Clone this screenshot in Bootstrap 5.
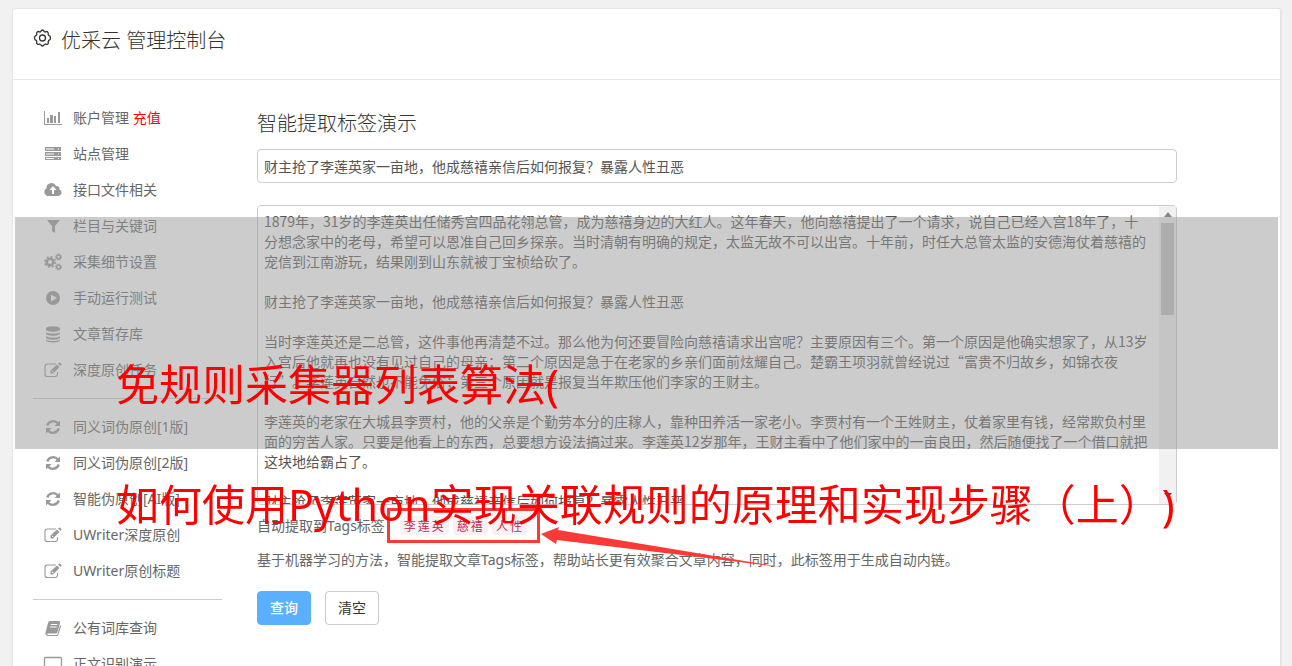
<!DOCTYPE html>
<html lang="zh-CN">
<head>
<meta charset="utf-8">
<meta name="viewport" content="width=device-width, initial-scale=1">
<title>优采云 管理控制台</title>
<link href="https://cdn.jsdelivr.net/npm/bootstrap@5.3.0/dist/css/bootstrap.min.css" rel="stylesheet">
<style>
body{font:400 14px/20px "Noto Sans","Noto Sans CJK SC",sans-serif;color:#666;background:#f1f1f1;text-spacing-trim:space-all}
.panel{margin:8px 10px 0 12px;border:1px solid #e5e5e5;border-right-width:2px;border-radius:4px;background:#fff}
.panel-head{height:71px;padding:0 20px 10px;border-bottom:1px solid #e5e5e5;color:#333}
.panel-head h1{font-size:20px;line-height:24px;font-weight:300;padding-top:4px}
.side{width:230px;padding:20px 20px 0}
.side a{height:36px;padding-left:10px;color:#666;gap:10px}
.side svg{width:20px;height:18px;color:#999;flex:none}
.side hr{margin:10px 0;border-color:#ccc;opacity:1;width:189px}
.side .pay{color:#f00}
.main-col{padding:31px 14px 0;max-width:948px}
.main-col h2{font-size:20px;line-height:26px;font-weight:300;color:#333;margin-bottom:12px}
.main-col .form-control{border-color:#ccc;border-radius:4px;padding:6px;font-size:14px;line-height:20px;color:#555;font-family:"Noto Sans CJK SC",sans-serif}
.title-box{margin-bottom:22px}
.main-col textarea.form-control{height:300px;resize:none;overflow-y:scroll;scrollbar-width:none;display:block;padding:5px 26px 5px 6px}
.bar{position:absolute;top:1px;right:1px;bottom:1px;width:17px;background:#f1f1f1;padding:6px 2px}
.bar svg{width:8px;height:5px}
.bar .thumb{height:92px;margin:6px 0 auto;background:#c1c1c1;width:13px}
.tags{border:3px solid #f93a37;height:35px;padding:6px 10px;gap:4px;margin-left:-12px}
.tags code{font:400 12px/19px "Noto Sans CJK SC",sans-serif;letter-spacing:2px;padding:0 3px 0 4px;background:#f9f2f4;color:#c7254e;border-radius:4px}
.tag-row{margin-top:3px}
.arrow{position:absolute;left:100%;top:15px;width:250px;height:44px;z-index:1}
.note{margin:7px 0 21px}
.btn{font-size:14px;line-height:20px;padding:6px 12px;border-radius:4px}
.btn-primary{--bs-btn-bg:#5aafff;--bs-btn-border-color:#5aafff;font-weight:500}
.btn-plain{border-color:#ccc;color:#333;background:#fff}
.acts{gap:14px}
.veil{position:absolute;left:15px;right:14px;top:217px;height:232px;background:rgba(153,153,153,.5);pointer-events:none;z-index:2}
.veil p{margin:0;padding:108px 0 0 101px;font-size:43px;line-height:120px;color:#f00;white-space:nowrap}
</style>
</head>
<body>
<svg class="d-none">
<symbol id="chart" viewBox="0 0 20 18"><path fill="currentColor" d="M1 2h1v13h17v1H1zM4 9h2v5H4zM7 6h3v8H7zM11 7h2v7h-2zM15 3h2v11h-2z"/></symbol>
<symbol id="server" viewBox="0 0 20 18"><path fill="currentColor" fill-rule="evenodd" d="M2 2h16v4H2zM3 3.500v1h8v-1zM15 3.500v1h1v-1zM2 7h16v4H2zM3 8.500v1h8v-1zM15 8.500v1h1v-1zM2 12h16v3H2zM3 13v1h8v-1zM15 13v1h1v-1z"/></symbol>
<symbol id="cloud" viewBox="0 0 20 18"><path fill="currentColor" fill-rule="evenodd" d="M5 15a4 4 0 0 1-1.500-7.500A5 5 0 0 1 13 5a3 3 0 0 1 3.500 3.500A3.400 3.400 0 0 1 15 15zM9 13h2V9h2.500L10 5 6.500 9H9z"/></symbol>
<symbol id="filter" viewBox="0 0 20 18"><path fill="currentColor" d="M4 3h13l-5 6v7l-3-2V9z"/></symbol>
<symbol id="cogs" viewBox="0 0 20 18"><g fill="none" stroke="currentColor"><circle cx="7" cy="9" r="3.300" stroke-width="2.500"/><circle cx="7" cy="9" r="5.200" stroke-width="1.600" stroke-dasharray="2 2.080"/><circle cx="15.500" cy="4" r="1.900" stroke-width="1.500"/><circle cx="15.500" cy="4" r="3" stroke-dasharray="1.300 1.050"/><circle cx="15.500" cy="14" r="1.900" stroke-width="1.500"/><circle cx="15.500" cy="14" r="3" stroke-dasharray="1.300 1.050"/></g></symbol>
<symbol id="play" viewBox="0 0 20 18"><path fill="currentColor" fill-rule="evenodd" d="M10 2a7 7 0 1 1 0 14 7 7 0 0 1 0-14zM8 5.500v7l6-3.500z"/></symbol>
<symbol id="db" viewBox="0 0 20 18"><path fill="currentColor" d="M3 3.500C3 .5 17 .5 17 3.500v1C17 7.500 3 7.500 3 4.500zM3 7c2 2 12 2 14 0v1.500c0 3-14 3-14 0zM3 11c2 2 12 2 14 0v1.500c0 3-14 3-14 0zM3 14.500c2 2 12 2 14 0v.8c0 3-14 3-14 0z"/></symbol>
<symbol id="edit" viewBox="0 0 20 18"><path fill="none" stroke="currentColor" stroke-width="1.100" d="M13 3H4.500Q2 3 2 5.500v8Q2 15.500 4.500 15.500H12q2.500 0 2.500-2.500v-2"/><path fill="currentColor" fill-rule="evenodd" d="M7.500 9.500l6.500-6 2.500 2.500-6.500 6.500H7.500zM9 10v1h1l.6-.6-1-1zM15 2.500l1-.8q.6-.4 1.200.1l1 1q.6.600.1 1.200l-.8 1z"/></symbol>
<symbol id="sync" viewBox="0 0 20 18"><path fill="none" stroke="currentColor" stroke-width="2.300" d="M4.200 7.500C6 2.500 12 2 14.800 5.300M15.800 10.500C14 15.500 8 16 5.200 12.700"/><path fill="currentColor" d="M17 2.500v5.500h-5.500zM3 15.500V10h5.500z"/></symbol>
<symbol id="book" viewBox="0 0 20 18"><path fill="currentColor" fill-rule="evenodd" d="M7 2h9q1.500.2 1 2l-2.500 9q-.5 1.500-2 1.500H5q-1 0-.8.8.2.700 1 .7h9L17.200 6q1 .5.600 2l-2.300 7.500Q15 17 13.500 17H4.700Q2 16.500 2.500 13.500L5 4q.5-2 2-2zM8 5l-.3 1h6.500l.3-1zM7.300 7.500l-.3 1h6.500l.3-1z"/></symbol>
<symbol id="screen" viewBox="0 0 20 18"><path fill="none" stroke="currentColor" stroke-width="1.300" d="M2.500 2.500h15q1 0 1 1v9q0 1-1 1h-15q-1 0-1-1v-9q0-1 1-1zM7 16h6"/></symbol>
</svg>
<div class="panel">
<header class="panel-head d-flex align-items-center">
<svg width="20" height="20" viewBox="0 0 20 20" fill="none" stroke="#333" stroke-width="1.300" stroke-linejoin="round"><circle cx="9.500" cy="9" r="3"/><path d="M7.800 2.600Q8.200 1 9.500 1t1.700 1.600q.6.300 1.200.5Q13.700 2 14.700 2.900t.4 2.400q.4.500.6 1.100Q17.500 6.800 17.500 9t-1.800 2.500q-.2.600-.6 1.200.8 1.400-.3 2.300t-2.400 0q-.6.300-1.200.5Q10.800 17 9.500 17t-1.700-1.500q-.6-.2-1.200-.5-1.300.9-2.400 0t-.3-2.300q-.4-.6-.6-1.200Q1.500 11.200 1.500 9t1.800-2.600q.2-.6.600-1.100-.8-1.500.3-2.400t2.400.2q.6-.3 1.200-.5z"/></svg>
<h1 class="mb-0 ms-2">优采云 管理控制台</h1>
</header>
<div class="d-flex">
<nav class="side nav flex-column flex-nowrap flex-shrink-0">
<a href="#" class="d-flex align-items-center text-decoration-none"><svg><use href="#chart"/></svg><span>账户管理 <span class="pay">充值</span></span></a>
<a href="#" class="d-flex align-items-center text-decoration-none"><svg><use href="#server"/></svg>站点管理</a>
<a href="#" class="d-flex align-items-center text-decoration-none"><svg><use href="#cloud"/></svg>接口文件相关</a>
<a href="#" class="d-flex align-items-center text-decoration-none"><svg><use href="#filter"/></svg>栏目与关键词</a>
<a href="#" class="d-flex align-items-center text-decoration-none"><svg><use href="#cogs"/></svg>采集细节设置</a>
<a href="#" class="d-flex align-items-center text-decoration-none"><svg><use href="#play"/></svg>手动运行测试</a>
<a href="#" class="d-flex align-items-center text-decoration-none"><svg><use href="#db"/></svg>文章暂存库</a>
<a href="#" class="d-flex align-items-center text-decoration-none"><svg><use href="#edit"/></svg>深度原创任务</a>
<hr>
<a href="#" class="d-flex align-items-center text-decoration-none"><svg><use href="#sync"/></svg>同义词伪原创[1版]</a>
<a href="#" class="d-flex align-items-center text-decoration-none"><svg><use href="#sync"/></svg>同义词伪原创[2版]</a>
<a href="#" class="d-flex align-items-center text-decoration-none"><svg><use href="#sync"/></svg>智能伪原创[AI版]</a>
<a href="#" class="d-flex align-items-center text-decoration-none"><svg><use href="#edit"/></svg>UWriter深度原创</a>
<a href="#" class="d-flex align-items-center text-decoration-none"><svg><use href="#edit"/></svg>UWriter原创标题</a>
<hr>
<a href="#" class="d-flex align-items-center text-decoration-none"><svg><use href="#book"/></svg>公有词库查询</a>
<a href="#" class="d-flex align-items-center text-decoration-none"><svg><use href="#screen"/></svg>正文识别演示</a>
</nav>
<main class="main-col flex-grow-1">
<h2 id="demo-title">智能提取标签演示</h2>
<input class="form-control title-box" type="text" aria-labelledby="demo-title" value="财主抢了李莲英家一亩地，他成慈禧亲信后如何报复？暴露人性丑恶">
<div class="position-relative">
<textarea class="form-control" aria-labelledby="demo-title">1879年，31岁的李莲英出任储秀宫四品花翎总管，成为慈禧身边的大红人。这年春天，他向慈禧提出了一个请求，说自己已经入宫18年了，十分想念家中的老母，希望可以恩准自己回乡探亲。当时清朝有明确的规定，太监无故不可以出宫。十年前，时任大总管太监的安德海仗着慈禧的宠信到江南游玩，结果刚到山东就被丁宝桢给砍了。

财主抢了李莲英家一亩地，他成慈禧亲信后如何报复？暴露人性丑恶

当时李莲英还是二总管，这件事他再清楚不过。那么他为何还要冒险向慈禧请求出宫呢？主要原因有三个。第一个原因是他确实想家了，从13岁入宫后他就再也没有见过自己的母亲；第二个原因是急于在老家的乡亲们面前炫耀自己。楚霸王项羽就曾经说过“富贵不归故乡，如锦衣夜行”。李莲英自然也不能免俗；第三个原因就是报复当年欺压他们李家的王财主。

李莲英的老家在大城县李贾村，他的父亲是个勤劳本分的庄稼人，靠种田养活一家老小。李贾村有一个王姓财主，仗着家里有钱，经常欺负村里面的穷苦人家。只要是他看上的东西，总要想方设法搞过来。李莲英12岁那年，王财主看中了他们家中的一亩良田，然后随便找了一个借口就把这块地给霸占了。

财主抢了李莲英家一亩地，他成慈禧亲信后如何报复？暴露人性丑恶</textarea>
<div class="bar d-flex flex-column align-items-center" aria-hidden="true"><svg viewBox="0 0 8 5"><path fill="#888" d="M4 0l4 5H0z"/></svg><div class="thumb"></div><svg viewBox="0 0 8 5"><path fill="#505050" d="M0 0h8L4 5z"/></svg></div>
</div>
<div class="tag-row d-flex align-items-center"><span class="text-nowrap">自动提取到Tags标签：</span><div class="tags d-flex align-items-center position-relative"><code>李莲英</code><code>慈禧</code><code>人性</code>
<svg class="arrow" viewBox="0 0 250 44"><path fill="#f93a37" d="M4 8L22 1l-1 3L244 41 20 14l-1 4z"/></svg></div>
</div>
<p class="note">基于机器学习的方法，智能提取文章Tags标签，帮助站长更有效聚合文章内容，同时，此标签用于生成自动内链。</p>
<div class="acts d-flex"><button class="btn btn-primary" type="button">查询</button><button class="btn btn-plain" type="button">清空</button></div>
</main>
</div>
</div>
<div class="veil"><p>免规则采集器列表算法(<br>如何使用Python实现关联规则的原理和实现步骤（上）)</p></div>
<script src="https://cdn.jsdelivr.net/npm/bootstrap@5.3.0/dist/js/bootstrap.bundle.min.js"></script>
</body>
</html>
